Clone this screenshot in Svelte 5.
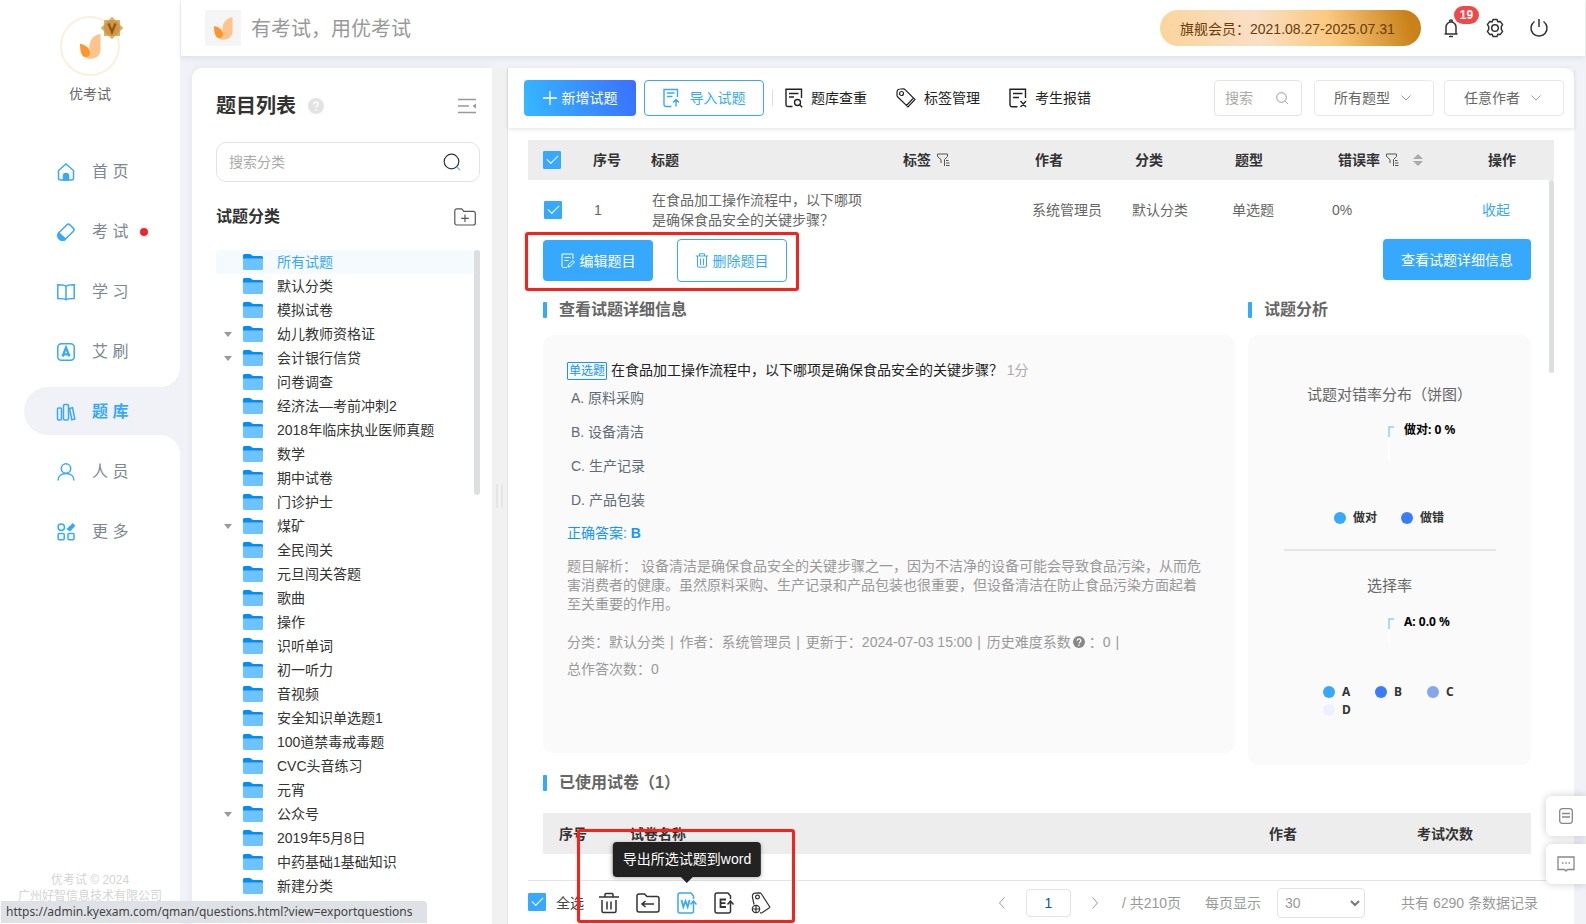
<script>
    const menu = [
        { icon: 'home', label: '首 页' },
        { icon: 'exam', label: '考 试', dot: true },
        { icon: 'book', label: '学 习' },
        { icon: 'ai', label: '艾 刷' },
        { icon: 'bank', label: '题 库' },
        { icon: 'user', label: '人 员' },
        { icon: 'more', label: '更 多' }
    ];

    const categories = [
        '所有试题', '默认分类', '模拟试卷', '幼儿教师资格证', '会计银行信贷', '问卷调查',
        '经济法—考前冲刺2', '2018年临床执业医师真题', '数学', '期中试卷', '门诊护士', '煤矿',
        '全民闯关', '元旦闯关答题', '歌曲', '操作', '识听单词', '初一听力', '音视频',
        '安全知识单选题1', '100道禁毒戒毒题', 'CVC头音练习', '元宵', '公众号', '2019年5月8日',
        '中药基础1基础知识', '新建分类'
    ];
    const parents = ['幼儿教师资格证', '会计银行信贷', '煤矿', '公众号'];

    const options = ['A. 原料采购', 'B. 设备清洁', 'C. 生产记录', 'D. 产品包装'];

    let activeMenu = $state('bank');
    let activeCategory = $state('所有试题');
    let allChecked = $state(true);
    let rowChecked = $state(true);
    let page = $state('1');
    let pageSize = $state('30');
</script>

{#snippet leaf()}
    <svg class="leaf" viewBox="0 0 22 26" aria-hidden="true">
        <path d="M21.500 0v16c0 6-4 10-10.500 10-3 0-5-1-7-3 4 0 7-2 6-6-1-9 3-16 11.500-17z" fill="#ffc48c" />
        <path d="M0 10c6 1 10.500 5 10.500 9.500 0 3-2 4.500-4.500 4.500-4 0-6-5-6-14z" fill="#ff962d" />
    </svg>
{/snippet}

{#snippet folder()}
    <svg class="folder" width="20" height="16" viewBox="0 0 20 16" aria-hidden="true">
        <path d="M0 1.500a1.500 1.500 0 0 1 1.500-1.500H7l3 2h8.500A1.500 1.500 0 0 1 20 3.500V9H0z" fill="#058cf5" />
        <path d="M0 4.500h20v10a1.500 1.500 0 0 1-1.500 1.500h-17A1.500 1.500 0 0 1 0 14.500z" fill="#6cc3ff" />
    </svg>
{/snippet}

{#snippet filter()}
    <svg class="line" width="13" height="14" viewBox="0 0 13 14" aria-hidden="true">
        <path d="M.5 1h10v2.500L7.500 6.500V13M.5 3.500l3.500 3V10M9 7.500h2.500M9 10h3.500M9 12.500h3.500M.5 1v2.500" />
    </svg>
{/snippet}

{#snippet chevron()}
    <svg class="chevron" width="10" height="6" viewBox="0 0 10 6" aria-hidden="true">
        <path d="M.5.500 5 5 9.500.5" fill="none" stroke="#999" />
    </svg>
{/snippet}

{#snippet menuIcon(name)}
    <svg class="menu-icon" width="20" height="20" viewBox="0 0 20 20" aria-hidden="true">
        {#if name === 'home'}
            <path d="M2.500 8.500 10 2l7.500 6.500V16a2 2 0 0 1-2 2h-11a2 2 0 0 1-2-2z" />
            <path d="M7.500 18v-4a2.500 2.500 0 0 1 5 0v4z" fill="#36a9ff" />
        {:else if name === 'exam'}
            <path d="M3 10.500 11 2.800a2 2 0 0 1 2.800 0l3.600 3.600a2 2 0 0 1 0 2.800L9.500 17a4 4 0 0 1-6 0 5 5 0 0 1-.5-6.500z" />
            <path d="M3 11l6.500 6a4 4 0 0 1-6 0 5 5 0 0 1-.5-6z" fill="#36a9ff" />
        {:else if name === 'book'}
            <path d="M10 4.500C9 3 7 2.800 1.800 2.800V16.500C7 16.500 9 16.800 10 17.800c1-1 3-1.300 8.200-1.300V2.800C13 2.800 11 3 10 4.500zV17.500" />
        {:else if name === 'ai'}
            <rect x="1.800" y="1.800" width="16.400" height="16.400" rx="3.500" />
            <path d="M6.500 14.500 10 5.500l3.500 9M7.500 12.300h5" stroke-width="2.200" />
        {:else if name === 'bank'}
            <rect x="1.500" y="6" width="4" height="12" rx="1" />
            <rect x="7.500" y="2.500" width="5" height="15.500" rx="1.200" />
            <path d="m13.500 6.500 3-.8 2.300 11.300-3 .8z" />
        {:else if name === 'user'}
            <circle cx="10" cy="6.500" r="4.700" />
            <path d="M2 18.500c0-4.500 3.500-7 8-7s8 2.500 8 7" />
        {:else}
            <circle cx="5.300" cy="5.300" r="3.200" />
            <rect x="2.200" y="11.500" width="6" height="6.300" rx="1" />
            <rect x="12" y="11.500" width="6" height="6.300" rx="1" />
            <path d="m12 7 4.800-4.500 1.200 1.300-4 4.500z" fill="#36a9ff" stroke-width="2" />
        {/if}
    </svg>
{/snippet}

<div class="app">
    <nav class="sidebar">
        <div class="avatar">
            {@render leaf()}
            <svg class="vip" width="24" height="24" viewBox="0 0 24 24" aria-hidden="true">
                <rect x="4" y="4" width="16" height="16" fill="#dcb066" />
                <rect x="4" y="4" width="16" height="16" fill="#dcb066" transform="rotate(45 12 12)" />
                <circle cx="12" cy="12" r="8" fill="#d0974a" />
                <path d="m8.500 7.500 3.500 8.500 3.500-8.500" fill="none" stroke="#955a12" stroke-width="2.500" />
            </svg>
        </div>
        <p class="org">优考试</p>
        <ul class="menu">
            {#each menu as item}
                <li>
                    <a href="#{item.icon}" class:active={item.icon === activeMenu} onclick={() => (activeMenu = item.icon)}>
                        {@render menuIcon(item.icon)}
                        <span>{item.label}</span>
                        {#if item.dot}<i class="dot"></i>{/if}
                    </a>
                </li>
            {/each}
        </ul>
        <p class="copyright">优考试 © 2024<br />广州好智信息技术有限公司</p>
    </nav>

    <div class="page">
        <header class="topbar">
            <div class="logo">{@render leaf()}</div>
            <span class="slogan">有考试，用优考试</span>
            <div class="member">旗舰会员：2021.08.27-2025.07.31</div>
            <button class="top-icon" aria-label="消息">
                <svg width="20" height="20" viewBox="0 0 20 20" class="dark">
                    <path d="M3.500 16h13M5 16V9a5 5 0 0 1 10 0v7M8.500 3.500a1.500 1.500 0 0 1 3 0M8 18.500h4" />
                </svg>
                <span class="count">19</span>
            </button>
            <button class="top-icon" aria-label="设置">
                <svg width="20" height="20" viewBox="0 0 20 20" class="dark">
                    <path d="M8 1.500h4l.8 2.300 2.400-.4 2.400 3.200-1.300 2 0 2.800 1.300 2-2.400 3.200-2.400-.4-.8 2.300H8l-.8-2.300-2.400.4-2.400-3.200 1.300-2 0-2.800-1.300-2 2.400-3.200 2.400.4z" stroke-linejoin="round" />
                    <circle cx="10" cy="10" r="3.300" />
                </svg>
            </button>
            <button class="top-icon" aria-label="退出">
                <svg width="20" height="20" viewBox="0 0 20 20" class="dark">
                    <path d="M5.500 3.500a8 8 0 1 0 9 0M10 1v8" />
                </svg>
            </button>
        </header>

        <div class="body">
            <aside class="panel">
                <div class="panel-head">
                    <h1>题目列表</h1>
                    <svg width="16" height="16" viewBox="0 0 16 16" aria-hidden="true">
                        <circle cx="8" cy="8" r="8" fill="#e3e3e3" />
                        <path d="M5.800 6.300a2.200 2.200 0 1 1 3.300 1.900Q8 8.800 8 9.800M8 11.300v1.400" fill="none" stroke="#fff" stroke-width="1.500" />
                    </svg>
                    <button class="collapse" aria-label="收起分类">
                        <svg width="18" height="16" viewBox="0 0 18 16">
                            <path d="M0 1.500h18M0 8h11M0 14.500h18" stroke="#999" stroke-width="1.500" />
                            <path d="M18 5.500v5L14.500 8z" fill="#999" />
                        </svg>
                    </button>
                </div>
                <label class="cat-search">
                    <input type="text" placeholder="搜索分类" aria-label="搜索分类" />
                    <svg width="18" height="18" viewBox="0 0 18 18" aria-hidden="true">
                        <circle cx="8.500" cy="8.500" r="7.300" fill="none" stroke="#333" stroke-width="1.200" />
                        <path d="m14 14 3 3" stroke="#6cc3ff" stroke-width="1.500" />
                    </svg>
                </label>
                <div class="sub-head">
                    <h2>试题分类</h2>
                    <button aria-label="新建分类">
                        <svg width="22" height="18" viewBox="0 0 22 18">
                            <path d="M.8 3a2 2 0 0 1 2-2.200h5l2 2.500h9.500a2 2 0 0 1 2 2V15a2 2 0 0 1-2 2H2.800a2 2 0 0 1-2-2zM11 6.500v7.500M7.200 10.300h7.600" fill="none" stroke="#555" stroke-width="1.200" />
                        </svg>
                    </button>
                </div>
                <div class="tree-wrap">
                    <ul class="tree">
                        {#each categories as name}
                            <li>
                                <button class:selected={name === activeCategory} onclick={() => (activeCategory = name)}>
                                    <i class="arrow" class:open={parents.includes(name)}></i>
                                    {@render folder()}
                                    <span>{name}</span>
                                </button>
                            </li>
                        {/each}
                    </ul>
                    <i class="bar tree-bar"></i>
                </div>
            </aside>

            <div class="splitter"><i></i></div>

            <main class="main">
                <div class="toolbar">
                    <button class="add">
                        <svg width="14" height="14" viewBox="0 0 14 14"><path d="M7 0v14M0 7h14" stroke="#fff" stroke-width="1.300" /></svg>
                        新增试题
                    </button>
                    <button class="import">
                        <svg width="17" height="20" viewBox="0 0 17 20">
                            <path d="M8.500 18.500H3a2 2 0 0 1-2-2V1.500h13.500V9M4 5h7.500M4 8.500h5.500M13 18.500V12m-3 2.500 3-3 3 3" />
                        </svg>
                        导入试题
                    </button>
                    <i class="divider"></i>
                    <button class="link">
                        <svg width="18" height="20" viewBox="0 0 18 20">
                            <path d="M7.500 18.500H3a2 2 0 0 1-2-2V1.200h15.500V10M4 5.500h9.500M4 9h5" />
                            <circle cx="12.500" cy="14.500" r="3" /><path d="m14.700 16.800 2.500 2.500" />
                        </svg>
                        题库查重
                    </button>
                    <button class="link">
                        <svg class="tag" width="20" height="20" viewBox="0 0 20 20">
                            <path d="M1 4.500Q1 1 4.500 1L7.500.8q1 0 1.600.8L19 11.500l-7 7.500L1.800 9Q1 8.300 1 7.300zM10.500 17.500l7-7.500" />
                            <circle cx="5.500" cy="5.500" r="2" />
                        </svg>
                        标签管理
                    </button>
                    <button class="link">
                        <svg width="18" height="20" viewBox="0 0 18 20">
                            <path d="M8.500 18.800H3a2 2 0 0 1-2-2V1.200h15.500V10M4 5.500h9.500M4 9.500h6M11.500 13l5.500 6M17 13l-5.500 6" />
                        </svg>
                        考生报错
                    </button>
                    <label class="search">
                        <input type="text" placeholder="搜索" aria-label="搜索" />
                        <svg width="12" height="12" viewBox="0 0 12 12" aria-hidden="true">
                            <path d="m9.300 9.300 2.500 2.500" />
                            <circle cx="5.500" cy="5.500" r="4.800" />
                        </svg>
                    </label>
                    <div class="select">
                        <select aria-label="题型"><option>所有题型</option></select>
                        {@render chevron()}
                    </div>
                    <div class="select">
                        <select aria-label="作者"><option>任意作者</option></select>
                        {@render chevron()}
                    </div>
                </div>

                <div class="content">
                    <i class="bar content-bar"></i>
                    <table class="questions">
                        <colgroup>
                            <col class="c-check" /><col class="c-no" /><col /><col class="c-tag" />
                            <col class="c-mid" /><col class="c-mid" /><col class="c-mid" />
                            <col class="c-rate" /><col class="c-op" />
                        </colgroup>
                        <thead>
                            <tr>
                                <th class="check"><input type="checkbox" aria-label="全选" bind:checked={allChecked} /></th>
                                <th>序号</th>
                                <th>标题</th>
                                <th>标签 {@render filter()}</th>
                                <th class="in">作者</th>
                                <th class="in">分类</th>
                                <th class="in">题型</th>
                                <th class="far">
                                    错误率 {@render filter()}
                                    <svg class="sort" width="10" height="12" viewBox="0 0 10 12" aria-hidden="true">
                                        <path d="M5 0l5 5H0zM5 12l5-5H0z" fill="#aaa" />
                                    </svg>
                                </th>
                                <th class="far">操作</th>
                            </tr>
                        </thead>
                        <tbody>
                            <tr>
                                <td class="check"><input type="checkbox" aria-label="选择第1题" bind:checked={rowChecked} /></td>
                                <td>1</td>
                                <td><p class="title">在食品加工操作流程中，以下哪项是确保食品安全的关键步骤？</p></td>
                                <td></td>
                                <td>系统管理员</td>
                                <td>默认分类</td>
                                <td>单选题</td>
                                <td>0%</td>
                                <td><a href="#fold">收起</a></td>
                            </tr>
                        </tbody>
                    </table>

                    <div class="detail">
                        <div class="actions">
                            <div class="group">
                                <button class="solid edit">
                                    <svg width="14" height="16" viewBox="0 0 14 16">
                                        <path d="M6 14.500H2.500A1.500 1.500 0 0 1 1 13V1h11v5M3.500 4.500h6M3.500 7.500h4M7 14l.5-2.500L12 7.500l1.500 1.500L9 13.500z" />
                                    </svg>
                                    编辑题目
                                </button>
                                <button class="ghost">
                                    <svg width="12" height="15" viewBox="0 0 12 15">
                                        <path d="M0 3h12M3.500 3V.8h5V3M1.500 3v10q0 1.200 1.200 1.200h6.600q1.200 0 1.200-1.200V3M4.500 5.500v6.500M7.500 5.500v6.500" />
                                    </svg>
                                    删除题目
                                </button>
                                <i class="mark mark-row"></i>
                            </div>
                            <button class="solid view">查看试题详细信息</button>
                        </div>

                        <div class="columns">
                            <section>
                                <h3>查看试题详细信息</h3>
                                <div class="card info">
                                    <p class="question"><span class="type">单选题</span> 在食品加工操作流程中，以下哪项是确保食品安全的关键步骤？ <small>1分</small></p>
                                    <ul class="options">
                                        {#each options as option}
                                            <li>{option}</li>
                                        {/each}
                                    </ul>
                                    <p class="answer">正确答案: <b>B</b></p>
                                    <p class="analysis">题目解析： 设备清洁是确保食品安全的关键步骤之一，因为不洁净的设备可能会导致食品污染，从而危害消费者的健康。虽然原料采购、生产记录和产品包装也很重要，但设备清洁在防止食品污染方面起着至关重要的作用。</p>
                                    <p class="meta">
                                        分类：默认分类 <span>|</span> 作者：系统管理员 <span>|</span> 更新于：2024-07-03 15:00 <span>|</span> 历史难度系数<svg width="12" height="12" viewBox="0 0 12 12" aria-hidden="true"><circle cx="6" cy="6" r="6" fill="#888" /><path d="M4.200 4.700a1.800 1.800 0 1 1 2.700 1.500Q6 6.700 6 7.500M6 8.500V10" fill="none" stroke="#fff" stroke-width="1.300" /></svg>
                                        ：0 <span>|</span><br />总作答次数：0
                                    </p>
                                </div>
                            </section>

                            <section>
                                <h3>试题分析</h3>
                                <div class="card charts">
                                    <h4>试题对错率分布（饼图）</h4>
                                    <div class="pie">
                                        <svg width="6" height="34" viewBox="0 0 6 34" aria-hidden="true">
                                            <path d="M1 11v23" stroke="#fff" stroke-width="1.500" />
                                            <path d="M1 11V1h5" fill="none" stroke="#8fcdff" stroke-width="1.500" />
                                        </svg>
                                        <span>做对: 0 %</span>
                                    </div>
                                    <ul class="legend two">
                                        <li><i class="c1"></i>做对</li>
                                        <li><i class="c2"></i>做错</li>
                                    </ul>
                                    <hr />
                                    <h4>选择率</h4>
                                    <div class="pie small">
                                        <svg width="6" height="24" viewBox="0 0 6 24" aria-hidden="true">
                                            <path d="M1 11v13" stroke="#fff" stroke-width="1.500" />
                                            <path d="M1 11V1h5" fill="none" stroke="#8fcdff" stroke-width="1.500" />
                                        </svg>
                                        <span>A: 0.0 %</span>
                                    </div>
                                    <ul class="legend four">
                                        <li><i class="c1"></i>A</li>
                                        <li><i class="c2"></i>B</li>
                                        <li><i class="c3"></i>C</li>
                                        <li><i class="c4"></i>D</li>
                                    </ul>
                                </div>
                            </section>
                        </div>

                        <h3 class="used">已使用试卷（1）</h3>
                        <table class="papers">
                            <thead>
                                <tr>
                                    <th class="p-no">序号</th>
                                    <th>试卷名称</th>
                                    <th class="p-author">作者</th>
                                    <th class="p-count">考试次数</th>
                                </tr>
                            </thead>
                        </table>
                    </div>
                </div>

                <footer class="footer">
                    <label class="all"><input type="checkbox" bind:checked={allChecked} />全选</label>
                    <div class="tools">
                        <button aria-label="删除">
                            <svg width="20" height="22" viewBox="0 0 20 22">
                                <path d="M0 5h20M6 5V2.500q0-1 1-1h6q1 0 1 1V5M3 8v11q0 1.500 1.500 1.500h11q1.500 0 1.500-1.500V8M8 9.500v8M12 9.500v8" />
                            </svg>
                        </button>
                        <button aria-label="移动分类">
                            <svg width="24" height="20" viewBox="0 0 24 20">
                                <path d="M1 3.500A2 2 0 0 1 3 1h5.500l2.500 2.500h10a2 2 0 0 1 2 2V17a2 2 0 0 1-2 2H3a2 2 0 0 1-2-2zM6 11h12M9.500 8 6 11l3.500 3" />
                            </svg>
                        </button>
                        <button class="word" aria-label="导出所选试题到word">
                            <svg width="20" height="22" viewBox="0 0 20 22">
                                <path d="M16.500 7V4L14 1H3a2 2 0 0 0-2 2v16a2 2 0 0 0 2 2h11.500a2 2 0 0 0 2-2V9.500m-3 3 3-3.500 3 3.500" />
                                <path d="m4.500 8 1.800 7L8.500 9l2.200 6 1.800-7" stroke-width="1.800" />
                            </svg>
                            <span class="tooltip">导出所选试题到word</span>
                        </button>
                        <button aria-label="导出excel">
                            <svg width="20" height="22" viewBox="0 0 20 22">
                                <path d="M16.500 7V4L14 1H3a2 2 0 0 0-2 2v16a2 2 0 0 0 2 2h11.500a2 2 0 0 0 2-2V9.500m-3 3 3-3.500 3 3.500" />
                                <path d="M12 7.500H6.500v7.500H12M6.500 11.200h5" stroke-width="1.800" />
                            </svg>
                        </button>
                        <button aria-label="添加标签">
                            <svg class="tag" width="20" height="22" viewBox="0 0 20 22">
                                <path d="M3 12.500 1.500 5.500Q1 1.500 4 1.200L8.500.8q1.200 0 1.800 1L18.500 14.500Q19 15.500 18 16L11 20.800q-1 .5-2-.3" />
                                <circle cx="6.500" cy="5" r="1.900" />
                                <circle cx="5" cy="17" r="3.700" /><path d="M5 14v6M2 17h6" />
                            </svg>
                        </button>
                        <i class="mark mark-tools"></i>
                    </div>
                    <div class="pager">
                        <button aria-label="上一页"><svg width="6" height="12" viewBox="0 0 6 12"><path d="M5.500.5.5 6l5 5.500" /></svg></button>
                        <input class="num" type="text" aria-label="页码" bind:value={page} />
                        <button aria-label="下一页"><svg width="6" height="12" viewBox="0 0 6 12"><path d="M.5.500l5 5.500-5 5.500" /></svg></button>
                        <span class="pages">/ 共210页</span>
                        <label for="size">每页显示</label>
                        <div class="size">
                            <select id="size" bind:value={pageSize}><option>30</option></select>
                            <svg class="chevron" width="10" height="7" viewBox="0 0 10 7" aria-hidden="true">
                                <path d="m1 1 4 4 4-4" fill="none" stroke="#777" stroke-width="2" />
                            </svg>
                        </div>
                        <span class="total">共有 6290 条数据记录</span>
                    </div>
                </footer>
            </main>
        </div>
    </div>

    <div class="float">
        <button aria-label="文档">
            <svg width="14" height="16" viewBox="0 0 14 16"><rect x=".7" y=".7" width="12.600" height="14.600" rx="2.500" /><path d="M3 5.500h8M3 9h8" /></svg>
        </button>
        <button aria-label="反馈">
            <svg width="18" height="16" viewBox="0 0 18 16"><path d="M1 1h16v12.500h-6.500L9 15l-1.500-1.500H1zM5 7h1.500M8.300 7h1.500M11.600 7h1.500" /></svg>
        </button>
    </div>

    <div class="status">https://admin.kyexam.com/qman/questions.html?view=exportquestions</div>
</div>

<style>
    :global(body) {
        background: #f1f2f8;
    }

    .app {
        display: flex;
        height: 100vh;
        overflow: hidden;
        position: relative;
        font-family: "Liberation Sans", "Noto Sans CJK SC", sans-serif;
        font-size: 14px;
        line-height: 20px;
        color: #666;
    }

    .app * {
        box-sizing: border-box;
    }

    p, ul, h1, h2, h3, h4 {
        margin: 0;
        padding: 0;
        list-style: none;
    }

    button, input, select {
        font: inherit;
        color: inherit;
        background: none;
        border: 0;
        padding: 0;
        margin: 0;
        outline: none;
    }

    button {
        cursor: pointer;
    }

    a {
        color: #36a9ff;
        text-decoration: none;
    }

    svg {
        flex: none;
    }

    .dark {
        fill: none;
        stroke: #333;
        stroke-width: 1.5;
    }

    input[type="checkbox"] {
        appearance: none;
        display: grid;
        place-items: center;
        flex: none;
        width: 18px;
        height: 18px;
        border: 1px solid #36a9ff;
        border-radius: 1px;
    }

    input[type="checkbox"]:checked {
        background: #36a9ff;
    }

    input[type="checkbox"]:checked::before {
        content: "";
        width: 10px;
        height: 5px;
        margin-bottom: 4px;
        border: solid #fff;
        border-width: 0 0 1px 1px;
        transform: rotate(-45deg);
    }

    /* 左侧导航 */
    .sidebar {
        display: flex;
        flex-direction: column;
        flex: none;
        width: 180px;
        padding-top: 16px;
        background: #fff;
    }

    .avatar {
        position: relative;
        display: grid;
        place-items: center;
        align-self: center;
        width: 60px;
        height: 60px;
        border: 2px solid #faf0de;
        border-radius: 50%;
    }

    .leaf {
        width: 21px;
        height: 25px;
    }

    .vip {
        position: absolute;
        top: -2px;
        right: -6px;
    }

    .org {
        margin-top: 8px;
        text-align: center;
    }

    .menu {
        display: flex;
        flex-direction: column;
        gap: 12px;
        margin-top: 43px;
        padding-left: 24px;
    }

    .menu a {
        position: relative;
        display: flex;
        align-items: center;
        height: 48px;
        padding: 2px 0 0 32px;
        border-radius: 24px 0 0 24px;
        font-size: 16px;
        color: #7f8792;
    }

    .menu-icon {
        margin-right: 16px;
        fill: none;
        stroke: #36a9ff;
        stroke-width: 1.5;
    }

    .menu a.active {
        background: #f1f2f8;
        color: #36a9ff;
        font-weight: bold;
    }

    .menu a.active::before,
    .menu a.active::after {
        content: "";
        position: absolute;
        right: 0;
        width: 20px;
        height: 20px;
    }

    .menu a.active::before {
        top: -20px;
        background: radial-gradient(circle at 0 0, transparent 20px, #f1f2f8 20px);
    }

    .menu a.active::after {
        bottom: -20px;
        background: radial-gradient(circle at 0 100%, transparent 20px, #f1f2f8 20px);
    }

    .dot {
        width: 8px;
        height: 8px;
        margin-left: 12px;
        border-radius: 50%;
        background: #f5222d;
    }

    .copyright {
        margin-top: auto;
        padding-bottom: 20px;
        font-size: 12px;
        line-height: 16px;
        text-align: center;
        color: #d4d4d4;
    }

    /* 顶部 */
    .page {
        display: flex;
        flex-direction: column;
        flex: 1;
        min-width: 0;
    }

    .topbar {
        display: flex;
        align-items: center;
        height: 56px;
        margin: 0 1px;
        padding: 0 36px 0 24px;
        background: #fff;
        box-shadow: 0 2px 6px rgba(0, 0, 40, 0.08);
    }

    .logo {
        display: grid;
        place-items: center;
        width: 36px;
        height: 36px;
        background: #f5f5f5;
    }

    .logo .leaf {
        width: 19px;
        height: 23px;
    }

    .slogan {
        margin-left: 10px;
        padding-top: 2px;
        font-size: 20px;
        color: #999;
    }

    .member {
        width: 261px;
        height: 36px;
        margin-left: auto;
        margin-right: 10px;
        padding-left: 20px;
        border-radius: 18px;
        line-height: 38px;
        color: #6b3b0c;
        background: linear-gradient(75deg, #fad49a, #f9dfc5 38%, #fbc87f 65%, #c98118 95%);
    }

    .top-icon {
        position: relative;
        display: flex;
        margin-left: 24px;
    }

    .member + .top-icon {
        margin-left: 10px;
    }

    .count {
        position: absolute;
        left: 13px;
        top: -12px;
        width: 25px;
        border-radius: 9px;
        font-size: 12px;
        font-weight: bold;
        line-height: 18px;
        text-align: center;
        color: #fff;
        background: #f04848;
    }

    .body {
        display: flex;
        flex: 1;
        min-height: 0;
        padding: 12px 12px 0;
    }

    /* 分类面板 */
    .panel {
        display: flex;
        flex-direction: column;
        flex: none;
        width: 300px;
        padding: 28px 12px 0 24px;
        border-radius: 10px 0 0 0;
        background: #fff;
        box-shadow: 0 0 10px rgba(0, 0, 40, 0.06);
    }

    .panel-head,
    .sub-head {
        display: flex;
        align-items: center;
        height: 20px;
    }

    h1 {
        margin-right: 12px;
        font-size: 20px;
        color: #333;
    }

    .panel-head button,
    .sub-head button {
        display: flex;
        margin-left: auto;
        margin-right: 4px;
    }

    .cat-search {
        display: flex;
        align-items: center;
        height: 40px;
        margin: 26px 0 25px;
        padding: 0 18px 0 12px;
        border: 1px solid #e3e3e3;
        border-radius: 10px;
    }

    input::placeholder {
        color: #aaa;
        opacity: 1;
    }

    .cat-search input {
        flex: 1;
        min-width: 0;
    }

    h2 {
        font-size: 16px;
        font-weight: bold;
        color: #333;
    }

    .tree-wrap {
        position: relative;
        flex: 1;
        min-height: 0;
        margin-top: 23px;
        padding-right: 6px;
        overflow: hidden;
    }

    .tree button {
        display: flex;
        align-items: center;
        width: 100%;
        height: 24px;
        color: #333;
    }

    .tree button.selected {
        border-radius: 3px;
        background: #f5faff;
        color: #36a9ff;
    }

    .arrow {
        width: 8px;
        margin: 0 11px 0 8px;
    }

    .arrow.open {
        border: solid transparent;
        border-width: 5px 4px 0;
        border-top-color: #999;
    }

    .folder {
        margin-right: 14px;
    }

    .bar {
        position: absolute;
        top: 0;
        right: 0;
        border-radius: 3px;
        background: #dddee0;
    }

    .tree-bar {
        width: 6px;
        height: 245px;
    }

    .splitter {
        display: flex;
        align-items: center;
        justify-content: center;
        flex: none;
        width: 16px;
        background: #f1f1f1;
        border-right: 1px solid #e5e5e5;
    }

    .splitter i {
        width: 7px;
        height: 24px;
        border: solid #e5e5e5;
        border-width: 0 2px;
    }

    /* 主区域 */
    .main {
        display: flex;
        flex-direction: column;
        flex: 1;
        min-width: 0;
        border-radius: 0 10px 0 0;
        background: #fff;
    }

    .toolbar {
        display: flex;
        align-items: center;
        flex: none;
        height: 60px;
        padding: 6px 10px 6px 16px;
        box-shadow: 0 1px 4px rgba(0, 0, 0, 0.12);
    }

    .toolbar button {
        display: flex;
        align-items: center;
        justify-content: center;
        height: 36px;
        white-space: nowrap;
    }

    .toolbar svg {
        fill: none;
        stroke: currentColor;
        stroke-width: 1.4;
    }

    .toolbar .tag,
    .tools .tag {
        stroke-width: 1.2;
    }

    .toolbar .add {
        gap: 5px;
        width: 112px;
        border-radius: 4px;
        color: #fff;
        background: linear-gradient(75deg, #36b8ff, #3a70ff);
    }

    .toolbar .import {
        gap: 10px;
        width: 120px;
        margin-left: 8px;
        border: 1px solid #36a9ff;
        border-radius: 4px;
        color: #36a9ff;
    }

    .divider {
        width: 1px;
        height: 16px;
        margin: 0 -17px 0 8px;
        background: #ddd;
    }

    .toolbar .link {
        gap: 8px;
        margin-left: 29px;
        color: #222;
    }

    .search {
        display: flex;
        align-items: center;
        width: 88px;
        height: 36px;
        margin-left: auto;
        padding: 0 13px 0 10px;
        border: 1px solid #e3e3e3;
        border-radius: 4px;
    }

    .toolbar .search svg {
        stroke: #999;
        stroke-width: 1;
    }

    .search input {
        flex: 1;
        min-width: 0;
    }

    .select {
        position: relative;
        width: 120px;
        height: 36px;
        margin-left: 12px;
        border: 1px solid #e8e8e8;
        border-radius: 4px;
    }

    .select + .select {
        margin-left: 10px;
    }

    .toolbar .chevron {
        stroke-width: 1;
    }

    select {
        appearance: none;
        width: 100%;
        height: 100%;
        padding-left: 19px;
    }

    .chevron {
        position: absolute;
        right: 22px;
        top: 50%;
        margin-top: -3px;
        pointer-events: none;
    }

    .content {
        position: relative;
        flex: 1;
        min-height: 0;
        margin: 12px 20px 0 12px;
        padding-left: 8px;
        overflow: hidden;
    }

    .content-bar {
        top: 40px;
        width: 5px;
        height: 193px;
    }

    table {
        width: 100%;
        border-collapse: collapse;
        table-layout: fixed;
        text-align: left;
    }

    .c-check { width: 60px; }
    .c-no { width: 58px; }
    .c-tag { width: 128px; }
    .c-mid { width: 100px; }
    .c-rate { width: 150px; }
    .c-op { width: 78px; }

    th {
        height: 40px;
        padding: 0 5px;
        background: #ededed;
        font-weight: bold;
        color: #333;
    }

    th.in {
        padding-left: 9px;
    }

    th.far {
        padding-left: 12px;
    }

    td {
        height: 59px;
        padding: 0 6px;
    }

    th.check {
        padding-left: 15px;
    }

    td.check {
        padding-left: 16px;
    }

    .line {
        margin-left: 2px;
        fill: none;
        stroke: #555;
        vertical-align: -2px;
    }

    .sort {
        margin-left: 10px;
        vertical-align: -1px;
    }

    .title {
        max-width: 218px;
    }

    .detail {
        padding: 0 23px 0 15px;
    }

    .actions {
        display: flex;
        justify-content: space-between;
        align-items: flex-start;
        height: 43px;
    }

    .group {
        position: relative;
        display: flex;
        align-items: center;
        gap: 24px;
    }

    .solid,
    .ghost {
        display: flex;
        align-items: center;
        justify-content: center;
        gap: 5px;
        width: 110px;
        height: 41px;
        border-radius: 4px;
    }

    .solid {
        background: #36a9ff;
        color: #fff;
    }

    .ghost {
        height: 43px;
        border: 1px solid #36a9ff;
        color: #36a9ff;
    }

    .solid svg,
    .ghost svg {
        fill: none;
        stroke: currentColor;
    }

    .view {
        width: 148px;
    }

    .mark {
        position: absolute;
        border: 3px solid #fb2018;
        border-radius: 3px;
        pointer-events: none;
    }

    .mark-row {
        inset: -7px -12px -9px -18px;
    }

    .columns {
        display: grid;
        grid-template-columns: minmax(0, 1fr) 283px;
        align-items: start;
        gap: 13px;
        margin-top: 18px;
    }

    h3 {
        display: flex;
        align-items: center;
        font-size: 16px;
        font-weight: bold;
        color: #666;
    }

    h3::before {
        content: "";
        width: 4px;
        height: 16px;
        margin-right: 12px;
        border-radius: 1px;
        background: #36a9ff;
    }

    .card {
        margin-top: 15px;
        border-radius: 10px;
        background: #fafafa;
    }

    .info {
        min-height: 418px;
        padding: 25px 28px 20px 24px;
    }

    .question {
        color: #222;
    }

    .type {
        display: inline-block;
        padding: 0 1px;
        border: 1px solid #1296ff;
        border-radius: 1px;
        font-size: 12px;
        line-height: 16px;
        color: #1296ff;
    }

    small {
        font-size: 14px;
        color: #aaa;
    }

    .options {
        padding: 1px 0 0 4px;
        line-height: 34px;
        color: #5f6b76;
    }

    .answer {
        margin-top: 6px;
        color: #1296ff;
    }

    .analysis {
        margin-top: 14px;
        line-height: 19px;
        color: #999;
    }

    .meta {
        margin-top: 15px;
        line-height: 27px;
        color: #999;
    }

    .meta span {
        margin: 0 2px 0 1px;
    }

    .meta svg {
        margin-left: 2px;
        vertical-align: -1px;
    }

    .charts {
        min-height: 430px;
        padding-top: 50px;
    }

    h4 {
        font-size: 15px;
        font-weight: normal;
        text-align: center;
    }

    .pie {
        display: flex;
        gap: 10px;
        margin: 21px 0 0 140px;
        font-family: "Noto Sans", "Noto Sans CJK SC", sans-serif;
        font-size: 12px;
        font-weight: bold;
        line-height: 8px;
        color: #000;
    }

    .pie.small {
        margin-top: 22px;
    }

    .legend {
        display: grid;
        font-family: "Noto Sans", "Noto Sans CJK SC", sans-serif;
        font-size: 12px;
        font-weight: bold;
        line-height: 18px;
        color: #333;
    }

    .legend.two {
        grid-template-columns: 67px 67px;
        margin: 49px 0 0 86px;
    }

    .legend.four {
        grid-template-columns: repeat(3, 52px);
        margin: 41px 0 0 75px;
    }

    .legend li {
        display: flex;
        align-items: center;
        gap: 7px;
    }

    .legend i {
        width: 12px;
        height: 12px;
        border-radius: 50%;
    }

    .c1 { background: #36a9ff; }
    .c2 { background: #3a7cff; }
    .c3 { background: #82a7ea; }
    .c4 { background: #edf1ff; }

    hr {
        height: 2px;
        margin: 22px 35px 25px 36px;
        border: 0;
        background: #e5e5e5;
    }

    .used {
        margin: 8px 0 20px;
    }

    .papers th {
        height: 41px;
        padding: 0 0 0 16px;
    }

    .papers .p-no { width: 71px; }
    .papers .p-author { width: 148px; }
    .papers .p-count { width: 130px; }

    /* 底部工具栏 */
    .footer {
        position: relative;
        display: flex;
        align-items: center;
        flex: none;
        height: 44px;
        margin: 0 28px 0 20px;
        border-top: 1px solid #e3e3e3;
        white-space: nowrap;
    }

    .all {
        display: flex;
        gap: 10px;
        color: #444;
    }

    .tools {
        position: relative;
        display: flex;
        align-items: center;
        gap: 17px;
        margin-left: 15px;
    }

    .tools button {
        position: relative;
        display: flex;
    }

    .tools svg {
        fill: none;
        stroke: #333;
        stroke-width: 1.5;
    }

    .tools .word svg {
        stroke: #36a9ff;
    }

    .tooltip {
        position: absolute;
        left: 50%;
        bottom: 37px;
        padding: 8px 10px;
        border-radius: 4px;
        line-height: 19px;
        color: #fff;
        background: #222;
        box-shadow: 0 1px 4px rgba(0, 0, 0, 0.3);
        transform: translateX(-50%);
    }

    .tooltip::after {
        content: "";
        position: absolute;
        left: 50%;
        top: 100%;
        margin-left: -6px;
        border: 6px solid transparent;
        border-bottom-width: 0;
        border-top-color: #222;
    }

    .mark-tools {
        inset: -63px -24px -9px -22px;
    }

    .pager {
        display: flex;
        align-items: center;
        margin-left: auto;
        margin-right: 8px;
        color: #999;
    }

    .pager button {
        display: flex;
    }

    .pager button svg {
        fill: none;
        stroke: #999;
    }

    .num {
        width: 45px;
        height: 28px;
        margin: 0 21px;
        border: 1px solid #e3e3e3;
        border-radius: 4px;
        text-align: center;
        color: #14568f;
    }

    .pages {
        margin: 0 24px;
    }

    .size {
        position: relative;
        width: 88px;
        height: 30px;
        margin: 0 36px 0 16px;
        border: 1px solid #e3e3e3;
        border-radius: 4px;
    }

    .size select {
        padding-left: 7px;
    }

    .size .chevron {
        right: 4px;
    }

    .float {
        position: absolute;
        right: 0;
        bottom: 40px;
        display: flex;
        flex-direction: column;
        gap: 8px;
    }

    .float button {
        display: grid;
        place-items: center;
        width: 40px;
        height: 40px;
        border-radius: 6px 0 0 6px;
        background: #fff;
        box-shadow: 0 0 8px rgba(0, 0, 0, 0.2);
    }

    .float svg {
        fill: none;
        stroke: #888;
        stroke-width: 1.3;
    }

    .status {
        position: absolute;
        left: 1px;
        bottom: 1px;
        padding: 0 14px 0 5px;
        border-radius: 0 4px 0 0;
        font-family: "Noto Sans", "Open Sans", sans-serif;
        font-size: 12px;
        line-height: 22px;
        color: #444;
        background: #dee1e6;
    }
</style>
